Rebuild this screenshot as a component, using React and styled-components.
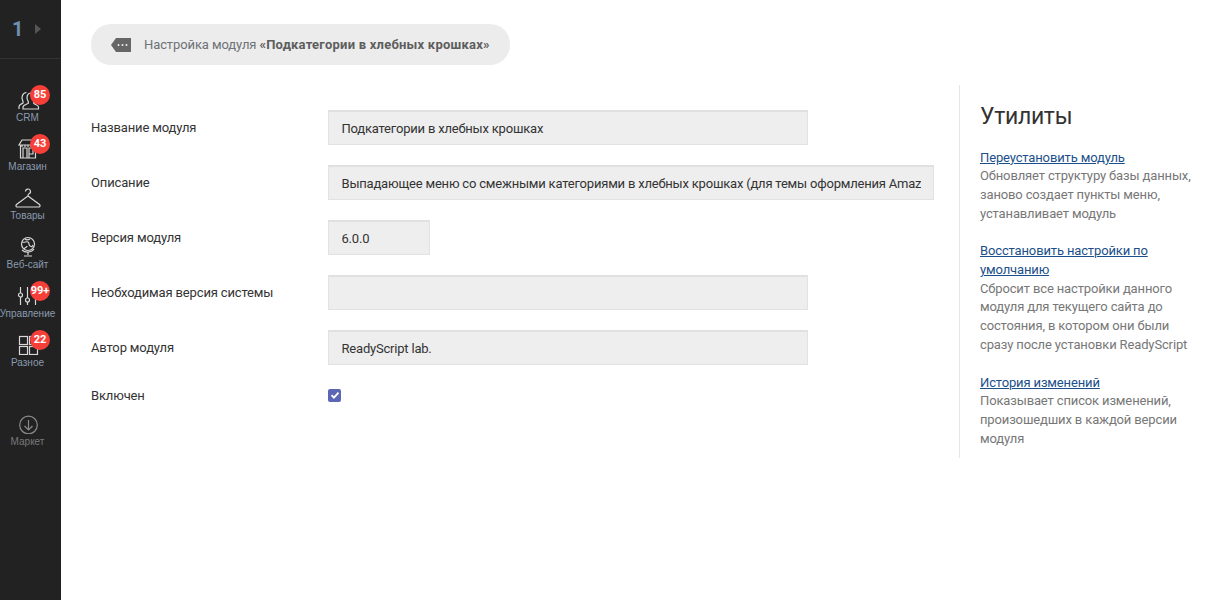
import React from "react";
import styled, { createGlobalStyle } from "styled-components";

const GlobalStyle = createGlobalStyle`
    html, body {
        margin: 0;
        padding: 0;
        background: #fff;
        font-family: Roboto, "Liberation Sans", sans-serif;
    }
    * {
        box-sizing: border-box;
    }
`;

const Page = styled.div`
    display: flex;
    width: 1232px;
    height: 600px;
    overflow: hidden;
`;

const Sidebar = styled.nav`
    width: 61px;
    flex-shrink: 0;
    background: #222222;
    display: flex;
    flex-direction: column;
`;

const SiteSwitch = styled.div`
    height: 59px;
    border-bottom: 1px solid #333;
    display: flex;
    align-items: center;
    padding: 0 0 0 12px;
    gap: 12px;

    .num {
        color: #6f8fb0;
        font-size: 20px;
        font-weight: 700;
    }
    .arrow {
        width: 0;
        height: 0;
        border-left: 6px solid #555;
        border-top: 5px solid transparent;
        border-bottom: 5px solid transparent;
    }
`;

const NavList = styled.div`
    display: flex;
    flex-direction: column;
    padding-top: 25px;
    width: 55px;
`;

const NavItem = styled.div`
    position: relative;
    height: 49px;
    display: flex;
    flex-direction: column;
    align-items: center;
    margin-top: ${(p) => (p.$market ? "30px" : "0")};

    svg {
        display: block;
        height: 26px;
        width: 28px;
        flex-shrink: 0;
    }
`;

const NavLabel = styled.span`
    font-family: "Liberation Sans", Arial, sans-serif;
    font-size: 10px;
    line-height: 12px;
    margin-top: 2px;
    white-space: nowrap;
    color: ${(p) => (p.$muted ? "#77787a" : "#8a9ab0")};
`;

const Badge = styled.span`
    position: absolute;
    top: 1px;
    left: 30px;
    width: 20px;
    height: 20px;
    border-radius: 50%;
    background: #f73f3a;
    color: #fff;
    font-size: 11px;
    font-weight: 700;
    line-height: 20px;
    text-align: center;
    white-space: nowrap;
`;

const Main = styled.main`
    flex: 1;
    padding: 24px 0 0 30px;
    display: flex;
    flex-direction: column;
`;

const TitlePill = styled.div`
    align-self: flex-start;
    width: 419px;
    height: 41px;
    border-radius: 20px;
    background: #ececec;
    display: flex;
    align-items: center;
    padding-left: 20px;
    gap: 13px;
    font-size: 13px;
    letter-spacing: -0.1px;
    color: #6d7278;

    svg {
        width: 20px;
        height: 14px;
        display: block;
    }
    b {
        font-weight: 700;
        letter-spacing: 0.23px;
        color: #5e5e5e;
    }
`;

const Columns = styled.div`
    display: flex;
    margin-top: 20px;
`;

const Form = styled.div`
    width: 868px;
    padding-top: 25px;
    display: flex;
    flex-direction: column;
    gap: 20px;
`;

const Row = styled.div`
    display: flex;
    align-items: center;
    min-height: ${(p) => (p.$check ? "16px" : "35px")};
    margin-top: ${(p) => (p.$check ? "2px" : "0")};
`;

const Label = styled.label`
    width: 237px;
    flex-shrink: 0;
    font-size: 13px;
    letter-spacing: -0.15px;
    color: #333;
`;

const Field = styled.input`
    width: ${(p) => p.$w}px;
    height: 35px;
    background: #eeeeee;
    border: 1px solid #e2e2e2;
    border-top: 2px solid #e0e0e0;
    border-radius: 0;
    outline: none;
    padding: 0 12px 0 12.5px;
    font-family: Roboto, "Liberation Sans", sans-serif;
    font-size: 13px;
    letter-spacing: -0.2px;
    color: #333;
`;

const CheckBox = styled.span`
    width: 13px;
    height: 13px;
    border-radius: 2px;
    background: #5b66b4;
    display: flex;
    align-items: center;
    justify-content: center;

    svg {
        width: 10px;
        height: 10px;
    }
`;

const Utilities = styled.aside`
    width: 242px;
    height: 373px;
    border-left: 1px solid #e6e6e6;
    padding: 18px 0 0 20px;
`;

const UtilTitle = styled.h2`
    margin: 0 0 17.5px;
    font-size: 23px;
    line-height: 28px;
    font-weight: 400;
    letter-spacing: -0.3px;
    color: #333;
`;

const Util = styled.div`
    font-size: 13px;
    line-height: 18.7px;
    letter-spacing: -0.14px;
    color: #777;
    margin-bottom: 19px;

    a {
        display: block;
        color: #1b4f8a;
        text-decoration: underline;
    }
`;

const stroke = { fill: "none", stroke: "#d8d8d8", strokeWidth: 1.2 };

const CrmIcon = () => (
    <svg viewBox="0 0 28 26" {...stroke}>
        <path d="M9 25v-2c0-2 3-2.500 5-3.500 1-1 .5-2-.5-3.500-1-2.500-.5-7 3.500-7s4.500 4.500 3.500 7c-1 1.500-1.500 2.500-.5 3.500 1 1 4.500 1.500 4.500 3.500v2z" />
        <path d="M5 25v-2.500c0-2 3-2.500 4-3.500.5-1 0-1.500-.5-3-1-2.500-.5-7 4-7.500" />
    </svg>
);

const ShopIcon = () => (
    <svg viewBox="0 0 28 26" {...stroke}>
        <path d="M8 7h12l3 5H5zM6.500 12v13h15V12M9 25V15h4v10M15 25V15h4v6h-4" />
        <path d="M8 12v2M11 12v2M14 12v2M17 12v2M20 12v2" />
    </svg>
);

const HangerIcon = () => (
    <svg viewBox="0 0 28 26" {...stroke}>
        <path d="M11.500 9.500a2.500 2.500 0 1 1 3.500 2.300c-.8.400-1 1-1 2.200L2.500 22.500c-1 1-.5 2.500.5 2.500h22c1 0 1.500-1.500.5-2.500L14 14" />
    </svg>
);

const GlobeIcon = () => (
    <svg viewBox="0 0 28 26" {...stroke}>
        <circle cx="14" cy="13" r="6.500" />
        <path d="M8 11c3 1 4-1 6 0s0 3 2 4 2 1 3-1M10 18c1-2 3-1 3-3M11 8c1 1 3 1 5 0" />
        <path d="M8 19c3 3 9 3 12-1M14 21v3M10 25h8" />
    </svg>
);

const SlidersIcon = () => (
    <svg viewBox="0 0 28 26" {...stroke}>
        <path d="M6.500 7v6M6.500 17v8M13.500 7v11M13.500 22v3M21.500 7v18" />
        <circle cx="6.500" cy="15" r="2" />
        <circle cx="13.500" cy="20" r="2" />
    </svg>
);

const GridIcon = () => (
    <svg viewBox="0 0 28 26" {...stroke}>
        <rect x="5.500" y="7.500" width="8" height="8" />
        <rect x="15.500" y="7.500" width="8" height="8" />
        <rect x="5.500" y="17.500" width="8" height="8" />
        <rect x="15.500" y="17.500" width="8" height="8" />
    </svg>
);

const MarketIcon = () => (
    <svg viewBox="0 0 28 26" fill="none" stroke="#8a8a8a" strokeWidth="1.2">
        <circle cx="14.500" cy="17" r="8.800" />
        <path d="M14.500 12v10M10.500 18l4 4 4-4" />
    </svg>
);

const TagIcon = () => (
    <svg viewBox="0 0 20 14">
        <path d="M5 0h15v14H5L0 7z" fill="#666" />
        <circle cx="7.500" cy="7" r="1" fill="#eee" />
        <circle cx="11.500" cy="7" r="1" fill="#eee" />
        <circle cx="15.500" cy="7" r="1" fill="#eee" />
    </svg>
);

const navItems = [
    { label: "CRM", icon: <CrmIcon />, badge: "85" },
    { label: "Магазин", icon: <ShopIcon />, badge: "43" },
    { label: "Товары", icon: <HangerIcon /> },
    { label: "Веб-сайт", icon: <GlobeIcon /> },
    { label: "Управление", icon: <SlidersIcon />, badge: "99+" },
    { label: "Разное", icon: <GridIcon />, badge: "22" },
];

const fields = [
    { label: "Название модуля", value: "Подкатегории в хлебных крошках", w: 480 },
    { label: "Описание", value: "Выпадающее меню со смежными категориями в хлебных крошках (для темы оформления Amazing)", w: 606 },
    { label: "Версия модуля", value: "6.0.0", w: 102 },
    { label: "Необходимая версия системы", value: "", w: 480 },
    { label: "Автор модуля", value: "ReadyScript lab.", w: 480 },
];

const utilities = [
    {
        link: "Переустановить модуль",
        text: "Обновляет структуру базы данных, заново создает пункты меню, устанавливает модуль",
    },
    {
        link: "Восстановить настройки по умолчанию",
        text: "Сбросит все настройки данного модуля для текущего сайта до состояния, в котором они были сразу после установки ReadyScript",
    },
    {
        link: "История изменений",
        text: "Показывает список изменений, произошедших в каждой версии модуля",
    },
];

const App = () => {
    return (
        <Page>
            <GlobalStyle />
            <Sidebar>
                <SiteSwitch>
                    <span className="num">1</span>
                    <span className="arrow" />
                </SiteSwitch>
                <NavList>
                    {navItems.map((item) => (
                        <NavItem key={item.label}>
                            {item.icon}
                            <NavLabel>{item.label}</NavLabel>
                            {item.badge && <Badge>{item.badge}</Badge>}
                        </NavItem>
                    ))}
                    <NavItem $market>
                        <MarketIcon />
                        <NavLabel $muted>Маркет</NavLabel>
                    </NavItem>
                </NavList>
            </Sidebar>
            <Main>
                <TitlePill>
                    <TagIcon />
                    <span>
                        Настройка модуля <b>«Подкатегории в хлебных крошках»</b>
                    </span>
                </TitlePill>
                <Columns>
                    <Form>
                        {fields.map((f) => (
                            <Row key={f.label}>
                                <Label>{f.label}</Label>
                                <Field $w={f.w} value={f.value} readOnly />
                            </Row>
                        ))}
                        <Row $check>
                            <Label>Включен</Label>
                            <CheckBox>
                                <svg viewBox="0 0 10 10">
                                    <path d="M1.500 5.200l2.400 2.400 4.600-5" fill="none" stroke="#fff" strokeWidth="1.8" />
                                </svg>
                            </CheckBox>
                        </Row>
                    </Form>
                    <Utilities>
                        <UtilTitle>Утилиты</UtilTitle>
                        {utilities.map((u) => (
                            <Util key={u.link}>
                                <a href="#">{u.link}</a>
                                {u.text}
                            </Util>
                        ))}
                    </Utilities>
                </Columns>
            </Main>
        </Page>
    );
};

export default App;
